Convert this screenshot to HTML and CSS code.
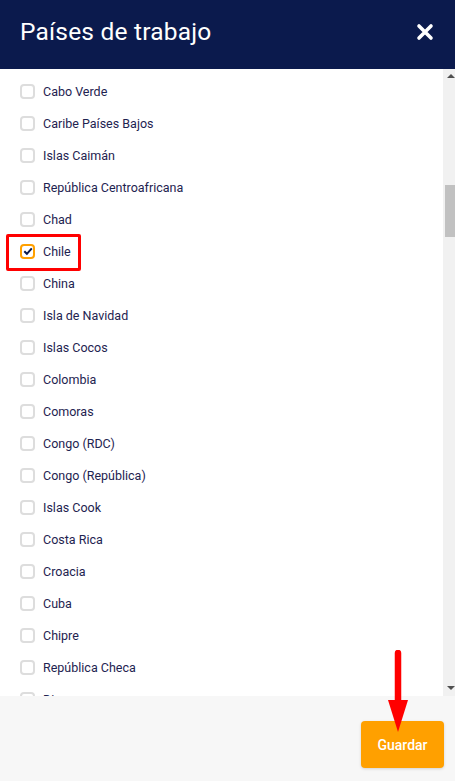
FILE: index.html
```html
<!DOCTYPE html>
<html lang="es">

<head>
  <meta charset="UTF-8">
  <title>Países de trabajo</title>
  <link rel="stylesheet" href="styles.css">
</head>

<body>
  <div class="modal">
    <div class="modal-head">
      <h1>Países de trabajo</h1>
      <svg class="close" width="18" height="18" viewBox="0 0 18 18">
        <path d="M3 3 L15 15 M15 3 L3 15" stroke="#fff" stroke-width="3.6" stroke-linecap="round" />
      </svg>
    </div>

    <div class="modal-body">
      <ul class="countries">
        <li><span class="box"></span>Cabo Verde</li>
        <li><span class="box"></span>Caribe Países Bajos</li>
        <li><span class="box"></span>Islas Caimán</li>
        <li><span class="box"></span>República Centroafricana</li>
        <li><span class="box"></span>Chad</li>
        <li class="checked">
          <span class="box">
            <svg width="10" height="10" viewBox="0 0 10 10">
              <path d="M1.3 5.2 L3.9 7.8 L8.8 2.3" fill="none" stroke="#0b1a4d" stroke-width="2" />
            </svg>
          </span>Chile
          <span class="mark"></span>
        </li>
        <li><span class="box"></span>China</li>
        <li><span class="box"></span>Isla de Navidad</li>
        <li><span class="box"></span>Islas Cocos</li>
        <li><span class="box"></span>Colombia</li>
        <li><span class="box"></span>Comoras</li>
        <li><span class="box"></span>Congo (RDC)</li>
        <li><span class="box"></span>Congo (República)</li>
        <li><span class="box"></span>Islas Cook</li>
        <li><span class="box"></span>Costa Rica</li>
        <li><span class="box"></span>Croacia</li>
        <li><span class="box"></span>Cuba</li>
        <li><span class="box"></span>Chipre</li>
        <li><span class="box"></span>República Checa</li>
        <li><span class="box"></span>Dinamarca</li>
      </ul>
      <div class="scrollbar">
        <span class="arrow-up"></span>
        <span class="thumb"></span>
        <span class="arrow-down"></span>
      </div>
    </div>

    <div class="modal-foot">
      <button class="save">Guardar</button>
    </div>

    <svg class="pointer" width="24" height="84" viewBox="0 0 24 84">
      <path d="M12 3 L12 52" stroke="#ff0000" stroke-width="6.5" stroke-linecap="round" />
      <path d="M2 50 L22 50 L12 82 Z" fill="#ff0000" />
    </svg>
  </div>
</body>

</html>
```

FILE: styles.css
```css
body {
  margin: 0;
  font-family: Roboto, "Liberation Sans", Arial, sans-serif;
  background-color: #fff;
}

.modal {
  position: relative;
  width: 455px;
  height: 781px;
  display: flex;
  flex-direction: column;
  overflow: hidden;
}

.modal-head {
  height: 69px;
  flex-shrink: 0;
  background-color: #0b1a4d;
  display: flex;
  align-items: center;
  justify-content: space-between;
  padding: 0 21px 0 20px;
}

.modal-head h1 {
  margin: 0;
  margin-top: -6px;
  color: #fff;
  font-size: 24.5px;
  font-weight: 400;
  letter-spacing: 0.2px;
}

.close {
  margin-top: -6px;
}

.modal-body {
  flex: 1;
  display: flex;
  min-height: 0;
}

.countries {
  flex: 1;
  list-style-type: none;
  margin: 0;
  padding: 6px 0 0 20px;
  overflow: hidden;
}

.countries>li {
  position: relative;
  height: 32px;
  display: flex;
  align-items: center;
  font-size: 12.5px;
  color: #1e2350;
}

.box {
  width: 15px;
  height: 15px;
  box-sizing: border-box;
  border: 2px solid #dddddd;
  border-radius: 4px;
  margin-right: 8px;
  display: flex;
  align-items: center;
  justify-content: center;
}

.checked .box {
  border-color: #ffa000;
}

.mark {
  position: absolute;
  left: -14px;
  top: -1px;
  width: 75px;
  height: 37px;
  box-sizing: border-box;
  border: 3px solid #ff0000;
  border-radius: 2px;
}

.scrollbar {
  width: 12px;
  background-color: #f1f1f1;
  display: flex;
  flex-direction: column;
  align-items: flex-end;
}

.arrow-up,
.arrow-down {
  width: 0;
  height: 0;
  border-left: 4px solid transparent;
  border-right: 4px solid transparent;
}

.arrow-up {
  margin-top: 5px;
  border-bottom: 4px solid #505050;
}

.arrow-down {
  margin-top: auto;
  margin-bottom: 6px;
  border-top: 4px solid #505050;
}

.thumb {
  width: 10px;
  height: 52px;
  margin-top: 107px;
  background-color: #c1c1c1;
}

.modal-foot {
  height: 85px;
  flex-shrink: 0;
  background-color: #f7f7f7;
  display: flex;
  align-items: flex-start;
  justify-content: flex-end;
  padding: 25px 11px 0 0;
  box-sizing: border-box;
}

.save {
  width: 83px;
  height: 47px;
  border: none;
  border-radius: 4px;
  background-color: #ffa000;
  color: #fff;
  font-family: Roboto, "Liberation Sans", Arial, sans-serif;
  font-size: 14px;
  font-weight: 500;
  box-shadow: 0 1px 3px rgba(0, 0, 0, 0.15);
  cursor: pointer;
}

.pointer {
  position: absolute;
  left: 386px;
  top: 650px;
}
```
